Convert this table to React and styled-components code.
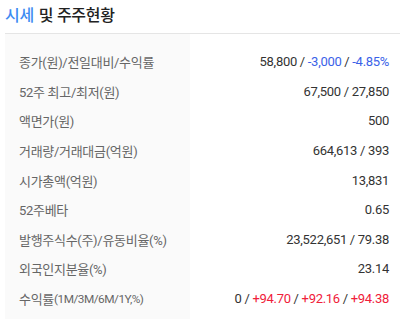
import React from "react";
import styled, { createGlobalStyle } from "styled-components";

const Global = createGlobalStyle`
  html, body { margin: 0; padding: 0; background: #fff; }
  body { font-family: Roboto, "Noto Sans CJK KR", sans-serif; }
`;

const Wrap = styled.div`
  padding: 0 0 0 5px;
  width: 395px;
`;

const Title = styled.h2`
  margin: 0;
  height: 34px;
  display: flex;
  align-items: center;
  padding-bottom: 6px;
  box-sizing: border-box;
  font-size: 16px;
  font-weight: 500;
  color: #222;
  letter-spacing: -0.3px;
  border-bottom: 1px solid #e5e5e5;
`;

const Blue = styled.span`
  color: #3d8bf2;
  margin-right: 5px;
`;

const Table = styled.div`
  display: grid;
  grid-template-columns: 185px 1fr;
  background: linear-gradient(to right, #fafafa 185px, #fff 185px);
  padding: 13px 0 6px;
`;

const Label = styled.div`
  height: 29.6px;
  display: flex;
  align-items: center;
  padding-left: 14px;
  font-size: 13px;
  color: #666;
  letter-spacing: -0.3px;
  white-space: nowrap;
`;

const Unit = styled.span`
  font-size: 11.8px;
  letter-spacing: -0.5px;
`;

const Value = styled.div`
  height: 29.6px;
  display: flex;
  align-items: center;
  justify-content: flex-end;
  padding-right: 11px;
  font-size: 13px;
  color: #333;
  letter-spacing: -0.3px;
  white-space: pre;
`;

const Num = styled.span`
  color: ${(p) => (p.$tone === "down" ? "#3a62e8" : p.$tone === "up" ? "#f0203a" : "#333")};
`;

const rows = [
  [["종가(원)/전일대비/수익률"], [["58,800"], ["-3,000", "down"], ["-4.85%", "down"]]],
  [["52주 최고/최저(원)"], [["67,500"], ["27,850"]]],
  [["액면가(원)"], [["500"]]],
  [["거래량/거래대금(억원)"], [["664,613"], ["393"]]],
  [["시가총액(억원)"], [["13,831"]]],
  [["52주베타"], [["0.65"]]],
  [["발행주식수(주)/유동비율(%)"], [["23,522,651"], ["79.38"]]],
  [["외국인지분율(%)"], [["23.14"]]],
  [["수익률", "(1M/3M/6M/1Y,%)"], [["0"], ["+94.70", "up"], ["+92.16", "up"], ["+94.38", "up"]]],
];

export default function App() {
  return (
    <Wrap>
      <Global />
      <Title>
        <Blue>시세</Blue>및 주주현황
      </Title>
      <Table>
        {rows.map(([[label, unit], vals]) => (
          <React.Fragment key={label}>
            <Label>
              {label}
              {unit && <Unit>{unit}</Unit>}
            </Label>
            <Value>
              {vals.map(([v, tone], i) => (
                <React.Fragment key={i}>
                  {i > 0 && <Num> / </Num>}
                  <Num $tone={tone}>{v}</Num>
                </React.Fragment>
              ))}
            </Value>
          </React.Fragment>
        ))}
      </Table>
    </Wrap>
  );
}
